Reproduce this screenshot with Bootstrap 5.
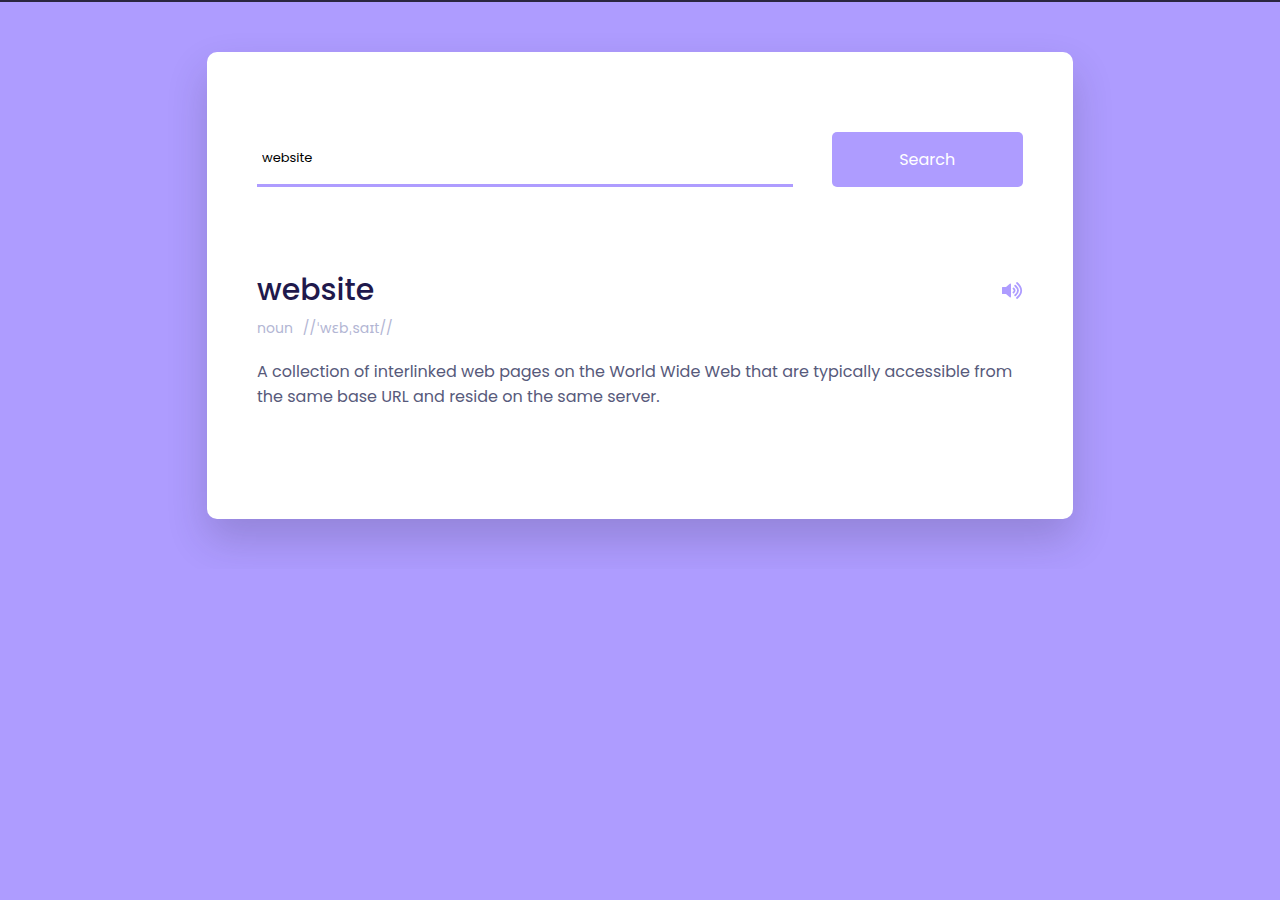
<!DOCTYPE html>
<html lang="en">
<head>
<meta charset="utf-8">
<meta name="viewport" content="width=device-width, initial-scale=1">
<title>Dictionary</title>
<link href="https://cdn.jsdelivr.net/npm/bootstrap@5.3.0/dist/css/bootstrap.min.css" rel="stylesheet">
<style>
body{background:#ae9cff;border-top:2px solid #2b2640;font-family:Poppins,"DejaVu Sans",sans-serif}
.dict-shell{width:90%;max-width:866px;margin:50px auto;padding:80px 50px;border-radius:10px;background:#fff;box-shadow:0 20px 40px rgba(38,33,61,.2)}
.word-input{width:70%;height:55px;padding:0 5px;border:0;border-bottom:3px solid #ae9cff;font-size:13px;color:#000;outline:0;background:#fff}
.search-btn{width:25%;height:55px;padding:0;border:0;border-radius:5px;background:#ae9cff;color:#fff;font-size:16px}
.result{margin-top:80px;min-height:172px}
.word-head h1{margin:0;font-size:30px;line-height:45px;font-weight:500;color:#1f194c}
.sound-btn{padding:0;border:0;background:none;color:#ae9cff;line-height:0}
.details{gap:10px;margin:6px 0 20px;font-size:14px;line-height:21px;color:#b3b6d4}
.meaning{margin:0;color:#575a7b;font-size:16px;line-height:25px}
</style>
</head>
<body>
<main class="dict-shell">
<form class="d-flex justify-content-between" onsubmit="return false">
<input class="word-input" type="text" aria-label="Word" value="website">
<button class="search-btn" type="submit">Search</button>
</form>
<section class="result">
<div class="word-head d-flex justify-content-between align-items-center">
<h1>website</h1>
<button class="sound-btn" type="button" aria-label="Play pronunciation"><svg width="22" height="18" viewBox="0 0 22 18"><path fill="currentColor" d="M1.500 6H5L8.800 2.800Q10 2.200 10 3.400V15.600Q10 16.800 8.800 16.200L5 13H1.500Q1 13 1 12.500V6.500Q1 6 1.500 6z"/><path fill="none" stroke="currentColor" stroke-width="1.800" stroke-linecap="round" d="M12.500 7.500Q14.800 9.500 12.500 11.500M14.200 4.700Q19.800 9.500 14.200 14.300M16 2Q24.400 9.500 16 17"/></svg></button>
</div>
<div class="details d-flex"><span>noun</span><span>//ˈwɛbˌsaɪt//</span></div>
<p class="meaning">A collection of interlinked web pages on the World Wide Web that are typically accessible from the same base URL and reside on the same server.</p>
</section>
</main>
<script src="https://cdn.jsdelivr.net/npm/bootstrap@5.3.0/dist/js/bootstrap.bundle.min.js"></script>
</body>
</html>
